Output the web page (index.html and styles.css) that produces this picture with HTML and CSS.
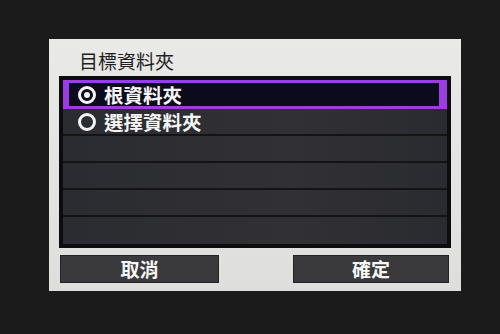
FILE: index.html
```html
<!DOCTYPE html>
<html lang="zh-Hant">
<head>
    <meta charset="UTF-8">
    <meta name="viewport" content="width=device-width, initial-scale=1.0">
    <title>目標資料夾</title>
    <link rel="stylesheet" href="styles.css">
</head>
<body>
    <div class="dialog">
        <h2 class="title">目標資料夾</h2>
        <div class="list">
            <div class="row selected">
                <span class="radio checked"></span>
                <span class="label">根資料夾</span>
            </div>
            <div class="row">
                <span class="radio"></span>
                <span class="label">選擇資料夾</span>
            </div>
            <div class="row"></div>
            <div class="row"></div>
            <div class="row"></div>
            <div class="row last"></div>
        </div>
        <div class="buttons">
            <button class="btn cancel">取消</button>
            <button class="btn ok">確定</button>
        </div>
    </div>
</body>
</html>
```

FILE: styles.css
```css
body {
    margin: 0;
    background-color: #1b1b1b;
    font-family: "Noto Sans CJK TC", "Noto Sans", sans-serif;
    height: 334px;
    overflow: hidden;
}

.dialog {
    margin: 39px 0 0 49px;
    width: 412px;
    height: 252px;
    box-sizing: border-box;
    background: linear-gradient(180deg, #e9e9e7 0%, #dededc 100%);
    padding: 12px 10px 0 10px;
}

.title {
    margin: 0 0 6px 20px;
    font-size: 19px;
    line-height: 19px;
    font-weight: 400;
    color: #1e1e1e;
}

.list {
    width: 392px;
    box-sizing: border-box;
    border: 4px solid #0d0d0f;
    background-color: #0d0d0f;
}

.row {
    height: 27px;
    box-sizing: border-box;
    border-bottom: 2px solid #141416;
    background: linear-gradient(90deg, #2b2c31 0%, #303035 60%, #2a2b30 100%);
    display: flex;
    align-items: center;
    padding-left: 15px;
}

.row.last {
    border-bottom: none;
}

.row.selected {
    height: 29px;
    border: 3px solid #9a3ee0;
    border-left-width: 6px;
    border-right-width: 8px;
    background: #0b0b1d;
    padding-left: 9px;
}

.radio {
    width: 18px;
    height: 18px;
    box-sizing: border-box;
    border: 3px solid #f4f4f4;
    border-radius: 50%;
    display: flex;
    align-items: center;
    justify-content: center;
    margin-right: 8px;
}

.radio.checked::after {
    content: "";
    width: 6px;
    height: 6px;
    border-radius: 50%;
    background-color: #f4f4f4;
}

.label {
    color: #f6f6f6;
    font-size: 19.5px;
    font-weight: 700;
    line-height: 20px;
}

.buttons {
    display: flex;
    justify-content: space-between;
    margin-top: 7px;
    padding: 0 2px 0 1px;
}

.btn {
    height: 28px;
    border: 1px solid #242426;
    background-color: #3a3a3c;
    color: #f6f6f6;
    font-family: inherit;
    font-size: 19px;
    font-weight: 700;
    line-height: 24px;
    padding: 0;
}

.cancel {
    width: 159px;
}

.ok {
    width: 156px;
}
```
